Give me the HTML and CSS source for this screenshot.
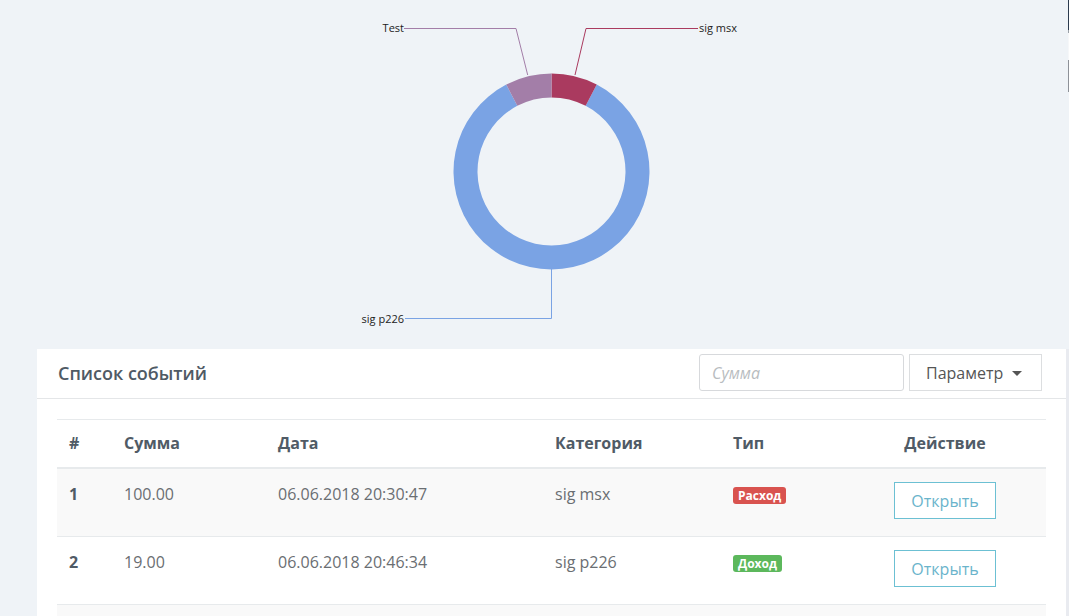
FILE: index.html
```html
<!DOCTYPE html>
<html lang="ru">
<head>
<meta charset="utf-8">
<title>Список событий</title>
<link rel="stylesheet" href="styles.css">
</head>
<body>
<div class="layout">
  <div class="main">
    <div class="chart">
      <svg class="donut" width="1029" height="349" viewBox="0 0 1029 349">
        <path fill="#7aa3e4" d="M559.75 84.57 A98 98 0 1 1 469.25 84.57 L480.33 105.86 A74 74 0 1 0 548.67 105.86 Z"/>
        <path fill="#aa3a5f" d="M514.5 73.5 A98 98 0 0 1 559.75 84.57 L548.67 105.86 A74 74 0 0 0 514.5 97.5 Z"/>
        <path fill="#a37ea8" d="M514.5 73.5 A98 98 0 0 0 469.25 84.57 L480.33 105.86 A74 74 0 0 1 514.5 97.5 Z"/>
        <polyline fill="none" stroke="#aa3a5f" stroke-width="1" points="538,75 549,28.5 661,28.5"/>
        <polyline fill="none" stroke="#a37ea8" stroke-width="1" points="490.7,75 479,28.5 367,28.5"/>
        <polyline fill="none" stroke="#7aa3e4" stroke-width="1" points="514.5,269 514.5,318.5 368,318.5"/>
        <text class="lbl" x="662" y="32">sig msx</text>
        <text class="lbl" x="367" y="32" text-anchor="end">Test</text>
        <text class="lbl" x="367" y="323" text-anchor="end">sig p226</text>
      </svg>
    </div>
    <section class="card">
      <header class="card-head">
        <h2 class="card-title">Список событий</h2>
        <div class="tools">
          <input class="sum-input" type="text" placeholder="Сумма">
          <button class="param-btn" type="button">Параметр <span class="caret"></span></button>
        </div>
      </header>
      <div class="card-body">
        <table class="events">
          <colgroup>
            <col class="c1"><col class="c2"><col class="c3"><col class="c4"><col class="c5"><col class="c6">
          </colgroup>
          <thead>
            <tr><th>#</th><th>Сумма</th><th>Дата</th><th>Категория</th><th>Тип</th><th class="center">Действие</th></tr>
          </thead>
          <tbody>
            <tr class="odd">
              <td class="num">1</td><td>100.00</td><td>06.06.2018 20:30:47</td><td>sig msx</td>
              <td><span class="badge badge-red">Расход</span></td>
              <td class="center"><button class="open-btn" type="button">Открыть</button></td>
            </tr>
            <tr>
              <td class="num">2</td><td>19.00</td><td>06.06.2018 20:46:34</td><td>sig p226</td>
              <td><span class="badge badge-green">Доход</span></td>
              <td class="center"><button class="open-btn" type="button">Открыть</button></td>
            </tr>
            <tr class="odd empty">
              <td></td><td></td><td></td><td></td><td></td><td></td>
            </tr>
          </tbody>
        </table>
      </div>
    </section>
  </div>
  <div class="edge">
    <div class="edge-top">
      <div class="e-navy"></div>
      <div class="e-grey"></div>
      <div class="e-light"></div>
      <div class="e-thumb"></div>
    </div>
    <div class="edge-fill"></div>
  </div>
</div>
</body>
</html>
```
FILE: styles.css
```css
* { box-sizing: border-box; }
html, body { margin: 0; padding: 0; }
body {
  background: #eff3f7;
  font-family: "Open Sans", "Noto Sans", sans-serif;
  color: #676a6c;
  font-size: 16px;
  overflow: hidden;
}
.layout {
  display: flex;
  width: 1069px;
  min-height: 616px;
}
.main {
  flex: 1;
  padding-left: 37px;
}
.chart { height: 349px; }
.donut { display: block; }
.lbl {
  font-family: "Open Sans", sans-serif;
  font-size: 11px;
  fill: #222;
}
.card {
  background: #fff;
}
.card-head {
  display: flex;
  align-items: center;
  justify-content: space-between;
  height: 50px;
  padding: 5px 24px 7px 21px;
  border-bottom: 1px solid #e4e6e8;
}
.card-title {
  margin: 0;
  font-size: 18px;
  font-weight: 600;
  color: #4f5a65;
  line-height: 24px;
}
.tools {
  display: flex;
  gap: 5px;
}
.sum-input {
  width: 205px;
  height: 37px;
  border: 1px solid #d7d9dc;
  border-radius: 3px;
  padding: 0 12px;
  font-family: "Open Sans", sans-serif;
  font-size: 16px;
  color: #555;
  outline: none;
}
.sum-input::placeholder {
  color: #b8bcc0;
  font-style: italic;
}
.param-btn {
  width: 133px;
  height: 37px;
  border: 1px solid #dcdee0;
  border-radius: 0;
  background: #fff;
  font-family: "Open Sans", sans-serif;
  font-size: 16px;
  color: #555;
  padding: 0 16px;
  display: flex;
  align-items: center;
  gap: 9px;
}
.caret {
  display: inline-block;
  width: 0;
  height: 0;
  border-left: 5px solid transparent;
  border-right: 5px solid transparent;
  border-top: 5px solid #555;
  margin-top: 1px;
}
.card-body {
  padding: 20px 20px 0;
}
.events {
  width: 989px;
  table-layout: fixed;
  border-collapse: collapse;
}
.c1 { width: 55px; }
.c2 { width: 154px; }
.c3 { width: 277px; }
.c4 { width: 178px; }
.c5 { width: 123px; }
.c6 { width: 202px; }
.events th {
  text-align: left;
  font-weight: 700;
  color: #505b66;
  line-height: 24px;
  padding: 11px 12px 12px;
  border-top: 1px solid #e7eaec;
  border-bottom: 2px solid #e7eaec;
}
.events td {
  vertical-align: top;
  line-height: 24px;
  padding: 13px 12px 17px;
  border-bottom: 1px solid #e7eaec;
  height: 68px;
  color: #6a6e72;
}
.events .center { text-align: center; }
.events td.num { font-weight: 700; color: #505b66; }
.events tr.odd td { background: #f9f9f9; }
.badge {
  display: inline-block;
  margin-top: 5px;
  height: 17px;
  padding: 0 5px;
  border-radius: 3px;
  font-size: 12px;
  line-height: 17px;
  font-weight: 700;
  color: #fff;
}
.badge-red { background: #d9534f; }
.badge-green { background: #5cb85c; }
.open-btn {
  width: 102px;
  height: 37px;
  border: 1px solid #6cc0d3;
  background: #fff;
  border-radius: 0;
  color: #6ab4cb;
  font-family: "Open Sans", sans-serif;
  font-size: 16px;
  padding: 0;
  vertical-align: top;
}
.edge {
  width: 3px;
  display: flex;
  flex-direction: column;
}
.edge-top {
  height: 349px;
  padding-left: 2px;
}
.e-navy { width: 1px; height: 30px; background: #2b3a4e; }
.e-grey { width: 1px; height: 3px; background: #9aa0a8; }
.e-light { width: 1px; height: 27px; background: #f6f7f9; }
.e-thumb { width: 1px; height: 32px; background: #8d9198; }
.edge-fill {
  flex: 1;
  background: #e9ebf0;
}
```
